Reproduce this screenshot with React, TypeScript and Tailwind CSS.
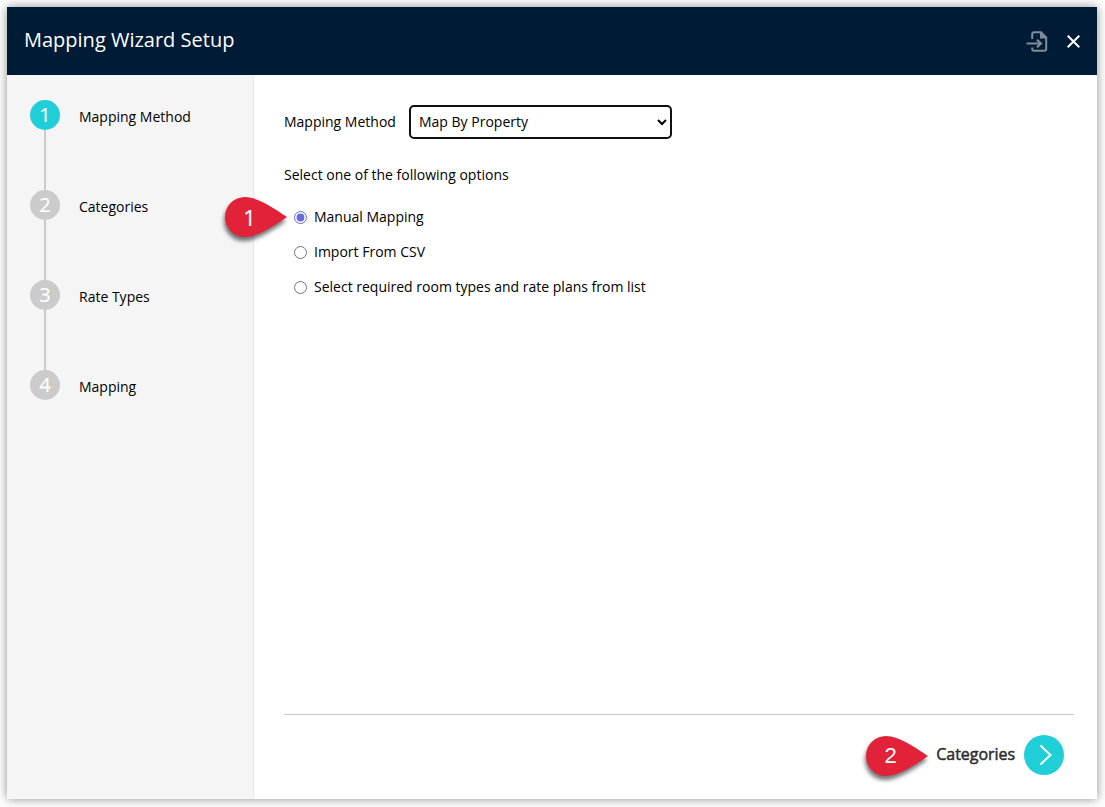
import { useState } from 'react';

const steps = ['Mapping Method', 'Categories', 'Rate Types', 'Mapping'];

const options = [
  { id: 'manual', label: 'Manual Mapping' },
  { id: 'csv', label: 'Import From CSV' },
  { id: 'list', label: 'Select required room types and rate plans from list' },
];

function Callout({ label, className, textClass }: { label: string; className: string; textClass: string }) {
  return (
    <div className={`absolute w-[62px] h-10 ${className}`}>
      <svg viewBox="0 0 62 40" className="w-full h-full overflow-visible drop-shadow-[-1px_4px_2px_rgba(0,0,0,0.55)]">
        <path d="M62 20C50 12 33 0 20 0a20 20 0 0 0 0 40C33 40 50 28 62 20Z" fill="#e22238" />
      </svg>
      <span className={`absolute left-0 top-0 w-[49px] h-10 flex items-center justify-center text-white leading-none ${textClass}`}>
        {label}
      </span>
    </div>
  );
}

export default function App() {
  const [selected, setSelected] = useState('manual');

  return (
    <div className="w-[1105px] h-[807px] bg-white pt-[7px] pl-[7px] overflow-hidden font-['Open_Sans',sans-serif] text-sm text-black">
      <div className="w-[1090px] h-[792px] flex flex-col bg-white shadow-[0_0_10px_rgba(0,0,0,0.45)]">
        <header className="h-[68px] shrink-0 bg-[#001b35] flex items-center justify-between pl-[17px] pr-[17px]">
          <h1 className="text-white text-xl leading-7 -mt-0.5">Mapping Wizard Setup</h1>
          <div className="flex items-center gap-[19px] pt-px">
            <button aria-label="Exit" className="block">
              <svg width="22" height="22" viewBox="0 0 22 22" fill="none" stroke="#808d9a" strokeWidth="2">
                <path d="M6.2 8V3.2Q6.2 1.2 8.2 1.2H15L20.2 6.4V17.8Q20.2 19.8 18.2 19.8H8.2Q6.2 19.8 6.2 17.8V16.5" />
                <path d="M14 1L20.5 7.5H14Z" fill="#808d9a" stroke="none" />
                <path d="M0.5 12.5H15M11 8.7L15 12.5L11 16.3" strokeWidth="2.2" />
              </svg>
            </button>
            <button aria-label="Close" className="block">
              <svg width="13" height="13" viewBox="0 0 13 13" fill="none" stroke="#fff" strokeWidth="2">
                <path d="M0.7 0.7L12.3 12.3M12.3 0.7L0.7 12.3" />
              </svg>
            </button>
          </div>
        </header>

        <div className="flex flex-1 min-h-0">
          {/* Steps */}
          <aside className="w-[247px] shrink-0 bg-[#f5f5f5] border-r border-[#e9e9e9] pt-[25px] pl-[23px]">
            {steps.map((step, i) => (
              <div key={step} className="flex h-[90px]">
                <div className="w-[30px] flex flex-col items-center">
                  <div
                    className={`w-[30px] h-[30px] shrink-0 rounded-full flex items-center justify-center text-white text-xl leading-none [-webkit-text-stroke:0.2px_#fff] ${i === 0 ? 'bg-[#20ced8]' : 'bg-[#cbcbcb]'}`}
                  >
                    {i + 1}
                  </div>
                  {i < steps.length - 1 && <div className="w-0.5 flex-1 bg-[#cbcbcb]" />}
                </div>
                <span className="ml-[19px] mt-[7px] leading-5">{step}</span>
              </div>
            ))}
          </aside>

          <main className="flex-1 flex flex-col pt-[30px] pl-[30px] pr-[23px]">
            <div className="flex items-center">
              <label htmlFor="method" className="w-[125px] leading-5">Mapping Method</label>
              <select
                id="method"
                className="w-[263px] h-[34px] border-2 border-[#101010] rounded-[5px] bg-white pl-1 pb-0.5 outline-none"
              >
                <option>Map By Property</option>
                <option>Map By Room</option>
              </select>
            </div>

            <p className="mt-[26px] leading-5">Select one of the following options</p>

            <div className="relative mt-[15px] pl-2.5 flex flex-col">
              {options.map((option) => (
                <label key={option.id} className="flex items-center h-[35px]">
                  <input
                    type="radio"
                    name="option"
                    className="w-[13px] h-[13px] mr-[7px] accent-[#6b69d6]"
                    checked={selected === option.id}
                    onChange={() => setSelected(option.id)}
                  />
                  <span className="leading-5 pb-0.5">{option.label}</span>
                </label>
              ))}
              <Callout label="1" className="-left-[59px] -top-[3px]" textClass="text-[22px] [-webkit-text-stroke:0.2px_#fff]" />
            </div>

            <footer className="relative mt-auto h-[85px] border-t border-[#c8c8c8] pt-5 pr-2.5 flex items-start justify-end">
              <Callout label="2" className="right-[146px] top-[21px]" textClass="text-[22px] font-['Liberation_Sans',sans-serif]" />
              <button className="flex items-center gap-[9px]">
                <span className="text-base leading-5 pb-0.5 tracking-[-0.05px] text-[#2e2e2e] [-webkit-text-stroke:0.5px_#2e2e2e]">Categories</span>
                <span className="w-10 h-10 rounded-full bg-[#20ced8] flex items-center justify-center">
                  <svg width="12" height="20" viewBox="0 0 12 20" fill="none" stroke="#fff" strokeWidth="2" strokeLinecap="round" className="ml-[3px]">
                    <path d="M1 1L10.5 10L1 19" />
                  </svg>
                </span>
              </button>
            </footer>
          </main>
        </div>
      </div>
    </div>
  );
}
